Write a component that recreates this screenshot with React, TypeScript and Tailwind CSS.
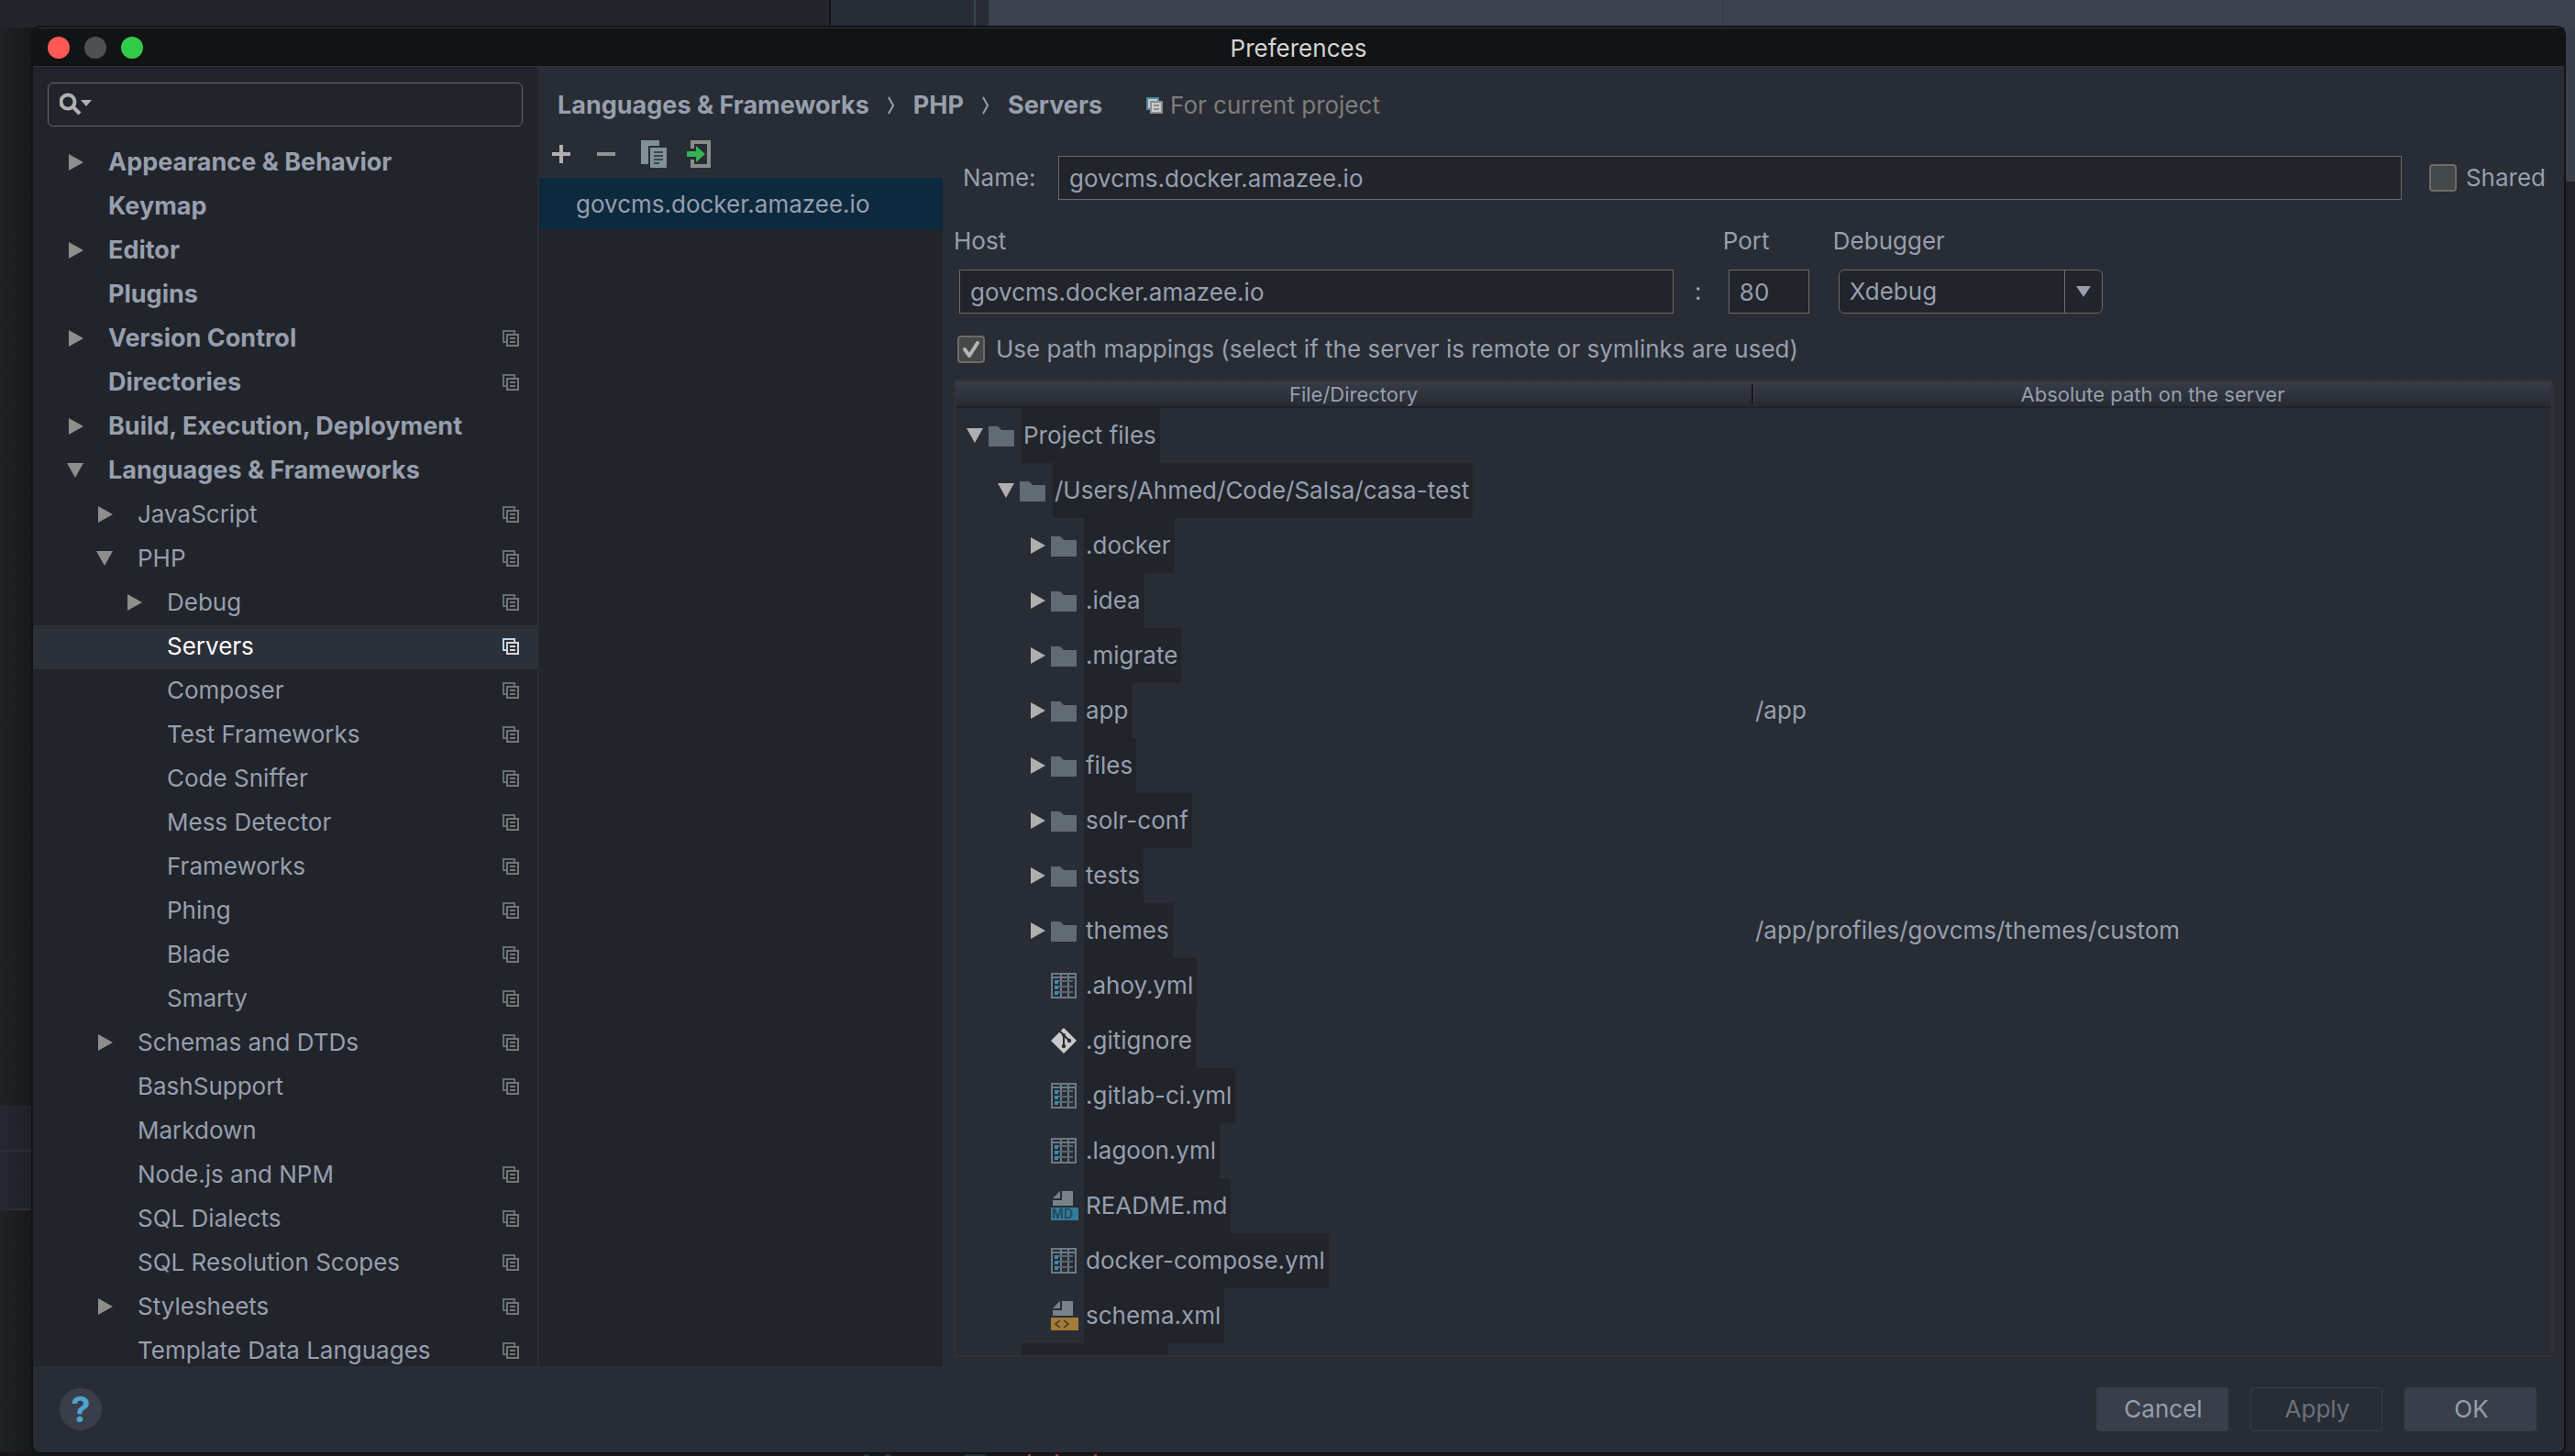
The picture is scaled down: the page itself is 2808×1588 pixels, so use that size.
import { useState } from "react";

type NavItem = {
  label: string;
  level: 0 | 1 | 2;
  arrow?: "open" | "closed";
  project?: boolean;
};

const navItems: NavItem[] = [
  { label: "Appearance & Behavior", level: 0, arrow: "closed" },
  { label: "Keymap", level: 0 },
  { label: "Editor", level: 0, arrow: "closed" },
  { label: "Plugins", level: 0 },
  { label: "Version Control", level: 0, arrow: "closed", project: true },
  { label: "Directories", level: 0, project: true },
  { label: "Build, Execution, Deployment", level: 0, arrow: "closed" },
  { label: "Languages & Frameworks", level: 0, arrow: "open" },
  { label: "JavaScript", level: 1, arrow: "closed", project: true },
  { label: "PHP", level: 1, arrow: "open", project: true },
  { label: "Debug", level: 2, arrow: "closed", project: true },
  { label: "Servers", level: 2, project: true },
  { label: "Composer", level: 2, project: true },
  { label: "Test Frameworks", level: 2, project: true },
  { label: "Code Sniffer", level: 2, project: true },
  { label: "Mess Detector", level: 2, project: true },
  { label: "Frameworks", level: 2, project: true },
  { label: "Phing", level: 2, project: true },
  { label: "Blade", level: 2, project: true },
  { label: "Smarty", level: 2, project: true },
  { label: "Schemas and DTDs", level: 1, arrow: "closed", project: true },
  { label: "BashSupport", level: 1, project: true },
  { label: "Markdown", level: 1 },
  { label: "Node.js and NPM", level: 1, project: true },
  { label: "SQL Dialects", level: 1, project: true },
  { label: "SQL Resolution Scopes", level: 1, project: true },
  { label: "Stylesheets", level: 1, arrow: "closed", project: true },
  { label: "Template Data Languages", level: 1, project: true },
];

const navIndent = ["pl-[37px]", "pl-[69px]", "pl-[101px]"];

type FileRow = {
  name: string;
  depth: 0 | 1 | 2;
  kind: "folder" | "yml" | "git" | "md" | "xml";
  arrow?: "open" | "closed";
  path?: string;
};

const fileRows: FileRow[] = [
  { name: "Project files", depth: 0, kind: "folder", arrow: "open" },
  { name: "/Users/Ahmed/Code/Salsa/casa-test", depth: 1, kind: "folder", arrow: "open" },
  { name: ".docker", depth: 2, kind: "folder", arrow: "closed" },
  { name: ".idea", depth: 2, kind: "folder", arrow: "closed" },
  { name: ".migrate", depth: 2, kind: "folder", arrow: "closed" },
  { name: "app", depth: 2, kind: "folder", arrow: "closed", path: "/app" },
  { name: "files", depth: 2, kind: "folder", arrow: "closed" },
  { name: "solr-conf", depth: 2, kind: "folder", arrow: "closed" },
  { name: "tests", depth: 2, kind: "folder", arrow: "closed" },
  { name: "themes", depth: 2, kind: "folder", arrow: "closed", path: "/app/profiles/govcms/themes/custom" },
  { name: ".ahoy.yml", depth: 2, kind: "yml" },
  { name: ".gitignore", depth: 2, kind: "git" },
  { name: ".gitlab-ci.yml", depth: 2, kind: "yml" },
  { name: ".lagoon.yml", depth: 2, kind: "yml" },
  { name: "README.md", depth: 2, kind: "md" },
  { name: "docker-compose.yml", depth: 2, kind: "yml" },
  { name: "schema.xml", depth: 2, kind: "xml" },
];

const fileIndent = ["pl-3", "pl-[46px]", "pl-20"];

function Arrow({ state, className }: { state?: "open" | "closed"; className: string }) {
  return (
    <svg className={`w-[18px] h-[18px] shrink-0 ${className}`} viewBox="0 0 18 18" fill="currentColor">
      {state === "open" && <path d="M0 1h18L9 17z" />}
      {state === "closed" && <path d="M2 0l16 9-16 9z" />}
    </svg>
  );
}

function ProjectIcon({ tone }: { tone: "dim" | "selected" | "header" }) {
  const back = tone === "selected" ? "#b5d9ee" : tone === "header" ? "#4a86a8" : "#5f7079";
  const front = tone === "selected" ? "#d6d6d6" : tone === "header" ? "#8c8c8c" : "#757573";
  return (
    <svg className="w-[18px] h-[18px] shrink-0" viewBox="0 0 18 18">
      <path d="M0 0h14v4h-2V2H2v10h2v2H0z" fill={back} />
      {tone === "header" && <path d="M2 2h10v2H4v8H2zM6 6h10v10H6z" fill="#c9c9c9" />}
      <path d="M4 4h14v14H4zM6 6v10h10V6zM8 8h6v2H8zM8 12h6v2H8z" fill={front} fillRule="evenodd" />
    </svg>
  );
}

function FileIcon({ kind }: { kind: FileRow["kind"] }) {
  if (kind === "folder") {
    return (
      <svg className="w-7 h-7 shrink-0" viewBox="0 0 28 28">
        <path d="M0 4h10l4 4h14v18H0z" fill="#626a74" />
      </svg>
    );
  }
  if (kind === "yml") {
    return (
      <svg className="w-7 h-7 shrink-0" viewBox="0 0 28 28">
        <path
          d="M0 0h28v28H0zM2 2v2h8V2zM12 2v2h6V2zM20 2v2h6V2zM2 6v20h8V6zM12 6v20h6V6zM20 6v20h6V6z"
          fill="#6b7a86"
          fillRule="evenodd"
        />
        <path d="M8 8h16v2H8zM8 14h16v2H8zM8 20h16v2H8z" fill="#59656f" />
        <path d="M4 8h4v4H4zM4 14h4v4H4zM4 20h4v4H4z" fill="#3a8bad" />
      </svg>
    );
  }
  if (kind === "git") {
    return (
      <svg className="w-7 h-7 shrink-0" viewBox="0 0 28 28">
        <path d="M14 0l14 14-14 14L0 14z" fill="#c9c9c9" />
        <path d="M9 3l5 5v12M14 8l6 6" stroke="#282c34" strokeWidth="2" fill="none" />
        <circle cx="14" cy="8" r="2" fill="#282c34" />
        <circle cx="14" cy="20" r="2.2" fill="#282c34" />
        <circle cx="20" cy="14" r="2.2" fill="#282c34" />
      </svg>
    );
  }
  return (
    <svg className="w-[30px] h-8 shrink-0" viewBox="0 0 30 32">
      <path d="M12 0h12v16H2v-6h10z" fill="#78828b" />
      <path d="M10 0v8H2z" fill="#78828b" />
      <path d="M0 18h30v14H0z" fill={kind === "md" ? "#317c99" : "#a47b3a"} />
      {kind === "md" ? (
        <text x="1" y="30" fontSize="14" fontWeight="600" fill="#25485a">
          MD
        </text>
      ) : (
        <path d="M10 21l-5 4 5 4M14 21l5 4-5 4" stroke="#574529" strokeWidth="2" fill="none" />
      )}
    </svg>
  );
}

function CheckBox({ id, checked, onChange }: { id: string; checked: boolean; onChange: (v: boolean) => void }) {
  return (
    <span className="relative size-[30px] shrink-0">
      <input
        id={id}
        type="checkbox"
        checked={checked}
        onChange={(e) => onChange(e.target.checked)}
        className="block size-[30px] appearance-none rounded border-2 border-[#6b6d6a] bg-[#434849]"
      />
      {checked && (
        <svg className="absolute inset-0 size-[30px] pointer-events-none" viewBox="0 0 30 30">
          <path d="M8 15l5 7L22 8" stroke="#b4b4b4" strokeWidth="4" strokeLinecap="round" strokeLinejoin="round" fill="none" />
        </svg>
      )}
    </span>
  );
}

function Sidebar() {
  const [selected, setSelected] = useState("Servers");

  return (
    <aside className="w-[552px] shrink-0 bg-[#21242b] border-r-2 border-[#282b33] overflow-hidden">
      <div className="mx-4 mt-[17px] mb-4 h-12 flex items-center gap-2 pl-3 border border-[#6a6a68] rounded-md">
        <svg className="w-[36px] h-[26px] shrink-0" viewBox="0 0 36 26">
          <circle cx="9" cy="10" r="7.5" stroke="#b0b0ae" strokeWidth="4" fill="none" />
          <path d="M14 15l8 8" stroke="#b0b0ae" strokeWidth="4" />
          <path d="M23 8h12l-6 7z" fill="#b0b0ae" />
        </svg>
        <input aria-label="Search" className="flex-1 min-w-0 h-full bg-transparent outline-none" />
      </div>
      <ul>
        {navItems.map((item) => {
          const active = item.label === selected;
          return (
            <li key={item.label}>
              <button
                onClick={() => setSelected(item.label)}
                className={`w-full h-12 flex items-center pb-0.5 pr-5 text-left ${navIndent[item.level]} ${
                  active ? "bg-[#2c3039] text-white" : ""
                }`}
              >
                <Arrow state={item.arrow} className="text-[#8e8e8c] mr-[27px]" />
                <span className={`flex-1 whitespace-nowrap ${item.level === 0 ? "text-[27px] font-bold" : ""}`}>
                  {item.label}
                </span>
                {item.project && <ProjectIcon tone={active ? "selected" : "dim"} />}
              </button>
            </li>
          );
        })}
      </ul>
    </aside>
  );
}

function Chevron() {
  return (
    <svg className="w-2 h-5 shrink-0" viewBox="0 0 8 20">
      <path d="M1 1l5 9-5 9" stroke="#979fad" strokeWidth="2" fill="none" />
    </svg>
  );
}

function Breadcrumbs() {
  return (
    <header className="flex items-center pt-6 pb-2 pl-5 leading-9">
      <div className="flex items-center gap-5 text-[27px] font-bold">
        <span>Languages &amp; Frameworks</span>
        <Chevron />
        <span>PHP</span>
        <Chevron />
        <span>Servers</span>
      </div>
      <div className="flex items-center gap-2 ml-12 text-[#7d7d7b]">
        <ProjectIcon tone="header" />
        <span>For current project</span>
      </div>
    </header>
  );
}

function ServerList() {
  return (
    <section className="w-[440px] shrink-0 flex flex-col">
      <div className="h-[53px] shrink-0 flex items-center">
        <button aria-label="Add" className="w-12 flex justify-center">
          <svg className="size-5" viewBox="0 0 20 20">
            <path d="M8 0h4v8h8v4h-8v8H8v-8H0V8h8z" fill="#afafaf" />
          </svg>
        </button>
        <button aria-label="Remove" className="w-[50px] flex justify-center">
          <svg className="size-5" viewBox="0 0 20 20">
            <path d="M0 8h20v4H0z" fill="#929292" />
          </svg>
        </button>
        <button aria-label="Copy" className="w-[54px] flex justify-center">
          <svg className="w-7 h-[30px]" viewBox="0 0 28 30">
            <path d="M0 0h20v6H8v20H0z" fill="#82909a" />
            <path d="M10 8h18v22H10z" fill="#82909a" />
            <path d="M14 12h10v2H14zM14 16h10v2H14zM14 20h10v2H14zM14 24h6v2h-6z" fill="#3d464e" />
          </svg>
        </button>
        <button aria-label="Import" className="w-11 flex justify-center">
          <svg className="w-[26px] h-[30px]" viewBox="0 0 26 30">
            <path d="M4 0h22v30H4v-9h4v5h14V4H8v5H4z" fill="#8c8c8a" />
            <path d="M0 12h10V6l10 9-10 9v-6H0z" fill="#34b254" />
          </svg>
        </button>
      </div>
      <ul className="flex-1 bg-[#21242b]">
        <li className="h-14 flex items-center pl-10 pt-0.5 bg-[#0d293e]">govcms.docker.amazee.io</li>
      </ul>
    </section>
  );
}

function MappingTable() {
  return (
    <div className="flex-1 min-h-0 mt-[15px] mb-[10px] border-2 border-[#313232] overflow-hidden">
      <table className="w-full table-fixed border-collapse">
        <thead>
          <tr className="h-7 bg-linear-to-b from-[#383c48] to-[#262a32] text-[22px] leading-[26px]">
            <th className="p-0 font-normal border-b-2 border-[#1f2228]">
              <div className="h-[22px] flex items-center justify-center border-r-2 border-[#16181c]">File/Directory</div>
            </th>
            <th className="p-0 font-normal border-b-2 border-[#1f2228]">
              <div className="h-[22px] flex items-center justify-center border-l border-[#3d424e]">
                Absolute path on the server
              </div>
            </th>
          </tr>
        </thead>
        <tbody>
          {fileRows.map((row) => (
            <tr key={row.name} className="h-[60px]">
              <td className="p-0">
                <div className={`h-[60px] flex items-center ${fileIndent[row.depth]}`}>
                  <Arrow state={row.arrow} className="text-[#afafaf] mr-1.5" />
                  <div className="w-9 shrink-0">
                    <FileIcon kind={row.kind} />
                  </div>
                  <span className="h-full flex items-center pl-0.5 pr-1 bg-[#21242b] whitespace-nowrap">{row.name}</span>
                </div>
              </td>
              <td className="p-0 pl-0.5">{row.path}</td>
            </tr>
          ))}
          <tr className="h-[60px]">
            <td className="p-0 pl-[72px]">
              <div className="w-40 h-[60px] bg-[#21242b]" />
            </td>
            <td />
          </tr>
        </tbody>
      </table>
    </div>
  );
}

const fieldClass =
  "h-12 px-[11px] bg-[#21242b] border border-[#6a6a68] outline-none min-w-0";

function ServerForm() {
  const [name, setName] = useState("govcms.docker.amazee.io");
  const [host, setHost] = useState("govcms.docker.amazee.io");
  const [port, setPort] = useState("80");
  const [shared, setShared] = useState(false);
  const [mappings, setMappings] = useState(true);

  return (
    <section className="flex-1 min-w-0 flex flex-col pl-3 pr-3">
      <div className="flex items-center mt-[29px] pl-[10px] pr-2">
        <label htmlFor="name" className="w-[104px]">
          Name:
        </label>
        <input id="name" value={name} onChange={(e) => setName(e.target.value)} className={`flex-1 ${fieldClass}`} />
        <div className="flex items-center gap-[10px] ml-[30px]">
          <CheckBox id="shared" checked={shared} onChange={setShared} />
          <label htmlFor="shared">Shared</label>
        </div>
      </div>

      <div className="flex items-end mt-[27px]">
        <div className="w-[45%] flex flex-col gap-[13px]">
          <label htmlFor="host" className="leading-9">
            Host
          </label>
          <input id="host" value={host} onChange={(e) => setHost(e.target.value)} className={`ml-1.5 ${fieldClass}`} />
        </div>
        <span className="w-[54px] h-12 flex items-center justify-center">:</span>
        <div className="w-[94px] flex flex-col gap-[13px]">
          <label htmlFor="port" className="leading-9">
            Port
          </label>
          <input id="port" value={port} onChange={(e) => setPort(e.target.value)} className={`ml-1.5 ${fieldClass}`} />
        </div>
        <div className="flex flex-col gap-[13px] ml-[26px]">
          <label htmlFor="debugger" className="leading-9">
            Debugger
          </label>
          <div className="relative ml-1.5">
            <select id="debugger" className={`w-72 appearance-none rounded-md ${fieldClass}`}>
              <option>Xdebug</option>
              <option>Zend Debugger</option>
            </select>
            <span className="absolute right-0 inset-y-0 w-[42px] flex items-center justify-center border-l border-[#6a6a68] pointer-events-none">
              <svg className="w-4 h-3" viewBox="0 0 16 12">
                <path d="M0 0h16L8 12z" fill="#979fad" />
              </svg>
            </span>
          </div>
        </div>
      </div>

      <div className="flex items-center gap-3 mt-[21px] pl-1 leading-9">
        <CheckBox id="mappings" checked={mappings} onChange={setMappings} />
        <label htmlFor="mappings">Use path mappings (select if the server is remote or symlinks are used)</label>
      </div>

      <MappingTable />
    </section>
  );
}

function Footer() {
  return (
    <footer className="h-[94px] shrink-0 flex items-center justify-between pl-[29px] pr-[30px]">
      <button
        aria-label="Help"
        className="size-[46px] rounded-full bg-[#3a3e4b] text-[#4fa3cf] text-[38px] leading-none font-bold flex items-center justify-center"
      >
        ?
      </button>
      <div className="flex gap-6">
        <button className="w-36 h-12 pl-0.5 rounded bg-[#3a3e4b]">Cancel</button>
        <button disabled className="w-36 h-12 pl-0.5 rounded border border-[#3a3e4b] text-[#6a707c]">
          Apply
        </button>
        <button className="w-36 h-12 pl-0.5 rounded bg-[#3a3e4b]">OK</button>
      </div>
    </footer>
  );
}

function PreferencesWindow() {
  return (
    <main className="flex-1 min-w-0 flex flex-col relative z-10 rounded-lg overflow-hidden bg-[#282c34] shadow-[0_0_0_2px_#101215]">
      <div className="h-[43px] shrink-0 grid grid-cols-3 items-center px-4 bg-[#121314] border-t border-b border-[#303234]">
        <div className="flex gap-4">
          <button aria-label="Close" className="size-6 rounded-full bg-[#ff5955]" />
          <button aria-label="Minimize" className="size-6 rounded-full bg-[#4f5052]" />
          <button aria-label="Zoom" className="size-6 rounded-full bg-[#34cb4b]" />
        </div>
        <h1 className="text-center text-[26px] leading-9 pt-0.5 text-[#d4d4d4]">Preferences</h1>
      </div>
      <div className="flex-1 min-h-0 flex">
        <Sidebar />
        <div className="flex-1 min-w-0 flex flex-col">
          <Breadcrumbs />
          <div className="flex-1 min-h-0 flex">
            <ServerList />
            <ServerForm />
          </div>
        </div>
      </div>
      <Footer />
    </main>
  );
}

export default function App() {
  return (
    <div className="h-screen flex flex-col overflow-hidden bg-[#121317] text-[#979fad] text-[26px] leading-8 font-[Inter,sans-serif]">
      {/* editor showing above the dialog */}
      <div className="h-[30px] shrink-0 flex">
        <div className="w-[906px] bg-[#22252b] border-r-2 border-[#121316]" />
        <div className="w-[158px] bg-[#282c34] border-r-2 border-[#34464e]" />
        <div className="w-[14px] bg-[#282c34]" />
        <div className="w-[802px] bg-[#3d424f] border-r-2 border-[#34414a]" />
        <div className="flex-1 bg-[#3d424f]" />
      </div>
      <div className="flex-1 min-h-0 flex">
        <div className="w-9 shrink-0 flex flex-col bg-linear-to-r from-[#1f2226] to-[#16181b]">
          <div className="h-[1176px]" />
          <div className="h-[50px] bg-linear-to-r from-[#252831] to-[#1d2027] border-b-2 border-[#2a2d36]" />
          <div className="h-16 bg-linear-to-r from-[#252831] to-[#1d2027] border-b-2 border-[#2e2c2c]" />
        </div>
        <PreferencesWindow />
        <div className="w-3 shrink-0 flex flex-col bg-[#1f2229]">
          <div className="h-[168px] bg-[#3a3f4b]" />
        </div>
      </div>
      {/* code line peeking out below */}
      <div className="h-1 shrink-0 flex bg-[#15151a]">
        <svg className="w-[1250px] h-1" viewBox="0 0 1250 4">
          <path d="M942 1h6v3h-6zM965 1h6v3h-6zM1052 2h22v2h-22z" fill="#24343a" />
          <path d="M1121 1h3v3h-3zM1151 1h3v3h-3zM1193 1h3v3h-3z" fill="#9a4048" />
        </svg>
      </div>
    </div>
  );
}
